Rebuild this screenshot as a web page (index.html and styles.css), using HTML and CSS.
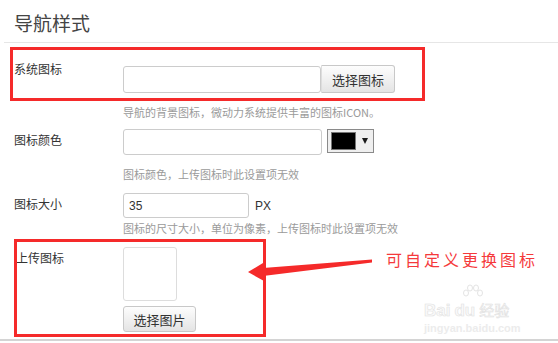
FILE: index.html
```html
<!DOCTYPE html>
<html lang="zh-CN">
<head>
  <meta charset="UTF-8" />
  <title>导航样式</title>
  <link rel="stylesheet" href="styles.css">
</head>
<body>

  <div class="panel">
    <h2 class="panel-title">导航样式</h2>

    <div class="form-row row-icon">
      <label class="form-label">系统图标</label>
      <div class="form-field">
        <div class="field-line">
          <input type="text" class="text-input input-wide">
          <button type="button" class="btn btn-icon">选择图标</button>
        </div>
        <p class="help help-1">导航的背景图标，微动力系统提供丰富的图标ICON。</p>
      </div>
    </div>

    <div class="form-row row-color">
      <label class="form-label">图标颜色</label>
      <div class="form-field">
        <div class="field-line">
          <input type="text" class="text-input input-wide input-color">
          <div class="color-picker">
            <span class="swatch"></span>
            <span class="caret"></span>
          </div>
        </div>
        <p class="help help-2">图标颜色，上传图标时此设置项无效</p>
      </div>
    </div>

    <div class="form-row row-size">
      <label class="form-label">图标大小</label>
      <div class="form-field">
        <div class="field-line">
          <input type="text" class="text-input input-size" value="35">
          <span class="unit">PX</span>
        </div>
        <p class="help help-3">图标的尺寸大小，单位为像素，上传图标时此设置项无效</p>
      </div>
    </div>

    <div class="form-row row-upload">
      <label class="form-label">上传图标</label>
      <div class="form-field">
        <div class="preview"></div>
        <button type="button" class="btn btn-upload">选择图片</button>
      </div>
    </div>

    <div class="panel-end"></div>
  </div>

  <!-- annotations drawn over the screenshot -->
  <div class="mark mark-1"></div>
  <div class="mark mark-2"></div>
  <svg class="arrow" width="558" height="343" viewBox="0 0 558 343">
    <polygon points="248,272 263,263 263,268 372,259.5 372,262.5 263,276 264,281" fill="#f52a2a"/>
  </svg>
  <div class="callout">可自定义更换图标</div>

  <div class="watermark">
    <svg class="wm-paw" width="26" height="16" viewBox="0 0 26 16">
      <g fill="none" stroke="#e4e4e4" stroke-width="1">
        <ellipse cx="6" cy="9" rx="2.5" ry="3"/>
        <ellipse cx="10" cy="4" rx="2.5" ry="3"/>
        <ellipse cx="16" cy="4" rx="2.5" ry="3"/>
        <ellipse cx="20" cy="9" rx="2.5" ry="3"/>
      </g>
    </svg>
    <div class="wm-logo">Bai<span class="wm-du">du</span><span class="wm-cn">经验</span></div>
    <div class="wm-url">jingyan.baidu.com</div>
  </div>

</body>
</html>
```

FILE: styles.css
```css
* {
  box-sizing: border-box;
}

body {
  margin: 0;
  background: #fff;
  font-family: "Noto Sans CJK SC", "Liberation Sans", sans-serif;
  color: #333;
}

.panel {
  width: 558px;
}

.panel-title {
  margin: 0 0 0 4px;
  padding: 11px 0 0 10px;
  height: 43px;
  font-size: 19px;
  line-height: 24px;
  font-weight: normal;
  color: #444;
  border-bottom: 1px solid #e6e6e6;
}

.form-row {
  display: grid;
  grid-template-columns: 109px 1fr;
  padding-left: 14px;
}

.form-label {
  font-size: 12px;
  line-height: 16px;
  padding-top: 3px;
  color: #333;
}

.row-icon {
  margin-top: 22px;
}

.row-icon .form-label {
  padding-top: 0;
  margin-top: -4px;
}

.row-color {
  margin-top: 9px;
}

.row-size {
  margin-top: 11px;
}

.row-upload {
  margin-top: 11px;
}

.row-upload .form-label {
  padding-left: 2px;
}

.field-line {
  display: flex;
  align-items: flex-end;
}

.text-input {
  border: 1px solid #ccc;
  border-radius: 3px;
  background: #fff;
  font-family: "Liberation Sans", sans-serif;
  font-size: 12px;
  color: #333;
  padding: 0 5px;
  outline: none;
}

.input-wide {
  width: 198px;
  height: 27px;
}

.input-color {
  width: 199px;
  height: 26px;
}

.row-color .field-line {
  align-items: flex-start;
}

.input-size {
  width: 126px;
  height: 25px;
}

.btn {
  font-family: "Noto Sans CJK SC", sans-serif;
  font-size: 13px;
  color: #333;
  background: linear-gradient(#fdfdfd, #e4e4e4);
  border: 1px solid #c8c8c8;
  border-radius: 3px;
  padding: 0;
  cursor: pointer;
}

.btn-icon {
  width: 74px;
  height: 28px;
  border-top-left-radius: 0;
  border-bottom-left-radius: 0;
  border-left-color: #ddd;
}

.color-picker {
  display: flex;
  align-items: center;
  width: 47px;
  height: 24px;
  margin-left: 5px;
  padding-left: 3px;
  border: 1px solid #8a8a8a;
  background: #efefef;
}

.swatch {
  width: 25px;
  height: 18px;
  background: #000;
  border: 1px solid #777;
}

.caret {
  width: 0;
  height: 0;
  margin-left: 6px;
  border-left: 3.5px solid transparent;
  border-right: 3.5px solid transparent;
  border-top: 6px solid #1a1a1a;
}

.unit {
  margin-left: 6px;
  font-family: "Liberation Sans", sans-serif;
  font-size: 12px;
  line-height: 16px;
  align-self: center;
  color: #333;
}

.help {
  margin: 0;
  font-size: 11px;
  line-height: 16px;
  color: #9a9a9a;
}

.help-1,
.help-2 {
  margin-top: 11px;
}

.help-3 {
  margin-top: 2px;
}

.preview {
  width: 54px;
  height: 54px;
  border: 1px solid #ddd;
  border-radius: 3px;
}

.btn-upload {
  display: block;
  width: 73px;
  height: 26px;
  margin-top: 5px;
}

.panel-end {
  margin-top: 7px;
  border-top: 2px solid #d4d4d4;
}

/* annotation layer */
.mark {
  position: absolute;
  border: 3px solid #f52a2a;
}

.mark-1 {
  left: 10px;
  top: 47px;
  width: 415px;
  height: 54px;
}

.mark-2 {
  left: 14px;
  top: 239px;
  width: 252px;
  height: 98px;
}

.arrow {
  position: absolute;
  left: 0;
  top: 0;
}

.callout {
  position: absolute;
  left: 386px;
  top: 248px;
  font-size: 16px;
  line-height: 22px;
  letter-spacing: 3px;
  color: #f5393b;
}

.watermark {
  position: absolute;
  left: 424px;
  top: 284px;
  font-family: "Liberation Sans", sans-serif;
}

.wm-paw {
  display: block;
  margin-left: 36px;
}

.wm-logo {
  font-size: 17px;
  font-weight: bold;
  line-height: 20px;
  color: #fafafa;
  -webkit-text-stroke: 0.6px #e2e2e2;
}

.wm-du {
  margin: 0 4px;
}

.wm-cn {
  font-family: "Noto Sans CJK SC", sans-serif;
  font-weight: normal;
  font-size: 15px;
}

.wm-url {
  font-size: 11px;
  font-weight: bold;
  line-height: 14px;
  color: #ececec;
}
```
